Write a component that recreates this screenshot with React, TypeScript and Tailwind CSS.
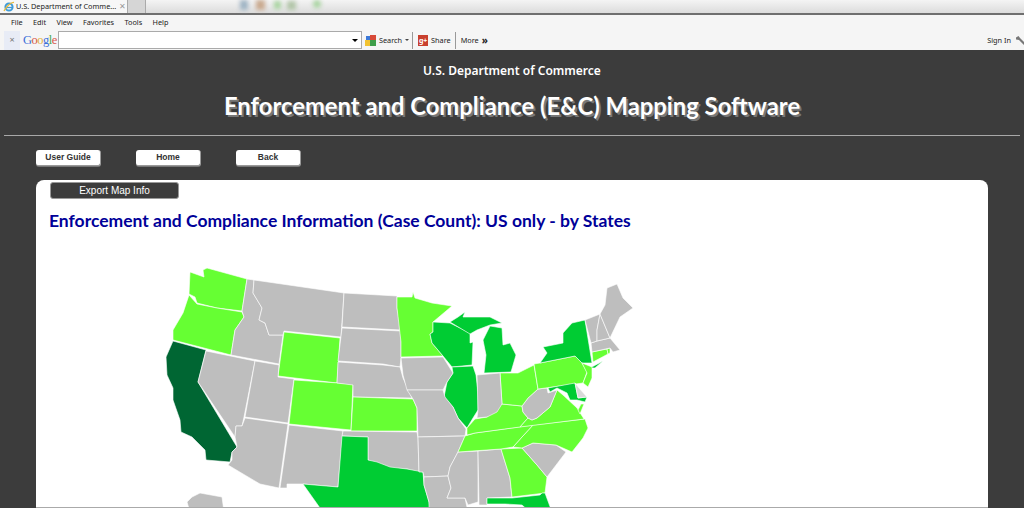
import React from "react";

const GRAY = "#bebebe";
const LIGHT = "#66ff33";
const MID = "#00cc33";
const DARK = "#006633";

// state outlines, traced in page pixels
const states: [string, string, string][] = [
  ["WA", LIGHT, "190,272 204,277 203,270 207,268 247,279 242,311 217,308 197,303 195,297 189,294"],
  ["OR", LIGHT, "189,295 197,304 217,308 242,312 244,317 235,330 231,355 173,340 173,330 183,313"],
  ["CA", DARK, "173,341 206,350 198,382 237,447 232,452 230,462 206,460 205,450 192,437 181,432 180,420 173,400 173,388 167,375 166,357"],
  ["NV", GRAY, "206,351 255,361 244,417 242,426 236,426 235,437 198,382"],
  ["ID", GRAY, "247,279 254,280 253,293 262,308 259,320 265,323 269,335 283,335 279,364 231,355 235,330 244,317 242,311"],
  ["MT", GRAY, "254,280 344,293 341,337 284,331 283,335 269,335 265,323 259,320 262,308 253,293"],
  ["WY", LIGHT, "284,332 340,338 337,383 278,376"],
  ["UT", GRAY, "255,361 279,365 278,377 294,379 288,423 245,417"],
  ["CO", LIGHT, "294,380 353,384 351,430 289,424"],
  ["AZ", GRAY, "245,418 288,424 279,488 260,484 228,465 232,460 232,452 237,447 235,437 236,426 242,426"],
  ["NM", GRAY, "289,425 343,431 338,487 303,484 287,484 287,488 280,488"],
  ["ND", GRAY, "344,293 397,296 397,308 401,330 342,327"],
  ["SD", GRAY, "342,328 401,331 401,345 401,358 400,367 383,364 338,361"],
  ["NE", GRAY, "338,362 383,365 400,367 403,378 412,398 353,397 353,385 337,383"],
  ["KS", LIGHT, "353,397 413,399 417,408 417,431 351,431"],
  ["OK", GRAY, "343,431 417,432 418,438 419,472 407,469 390,468 368,460 368,437 342,436"],
  ["TX", MID, "342,436 368,437 368,460 377,462 390,467 407,469 423,472 424,485 429,502 432,520 325,520 320,508 303,484 338,487"],
  ["MN", LIGHT, "397,297 412,297 413,292 415,298 432,303 452,306 433,322 433,332 430,334 432,343 443,356 401,357 401,342 397,308"],
  ["WI", MID, "433,322 450,323 470,333 470,343 473,342 472,365 452,367 443,356 432,343 430,334 433,332"],
  ["MIU", MID, "450,322 458,317 465,312 463,317 490,317 502,323 490,325 477,330 470,334"],
  ["MIL", MID, "490,326 502,328 503,345 510,343 516,355 511,372 484,373 486,355 483,340"],
  ["IL", MID, "452,367 473,366 476,375 478,392 478,410 473,418 467,428 458,418 453,407 444,397 447,382 453,373"],
  ["IA", GRAY, "401,358 443,357 453,373 447,382 443,390 407,390 403,375"],
  ["MO", GRAY, "407,390 443,390 445,397 453,407 458,418 466,429 465,436 458,436 418,437 417,408 413,399"],
  ["AR", GRAY, "418,437 465,436 458,452 450,467 448,476 424,477 423,472 419,472"],
  ["LA", GRAY, "424,477 448,476 451,488 447,498 465,498 468,512 429,512 429,502 424,485"],
  ["MS", GRAY, "458,452 478,451 478,502 468,505 465,498 447,498 451,488 448,476 450,467"],
  ["AL", GRAY, "478,451 501,449 510,478 512,497 487,498 487,505 479,505"],
  ["GA", LIGHT, "501,449 522,448 537,465 547,477 545,493 512,497 510,478"],
  ["FL", MID, "487,498 512,498 540,495 542,493 545,493 552,512 530,512 522,505 505,504 487,504"],
  ["SC", GRAY, "522,448 533,443 556,445 566,452 547,477 537,465"],
  ["NC", LIGHT, "513,447 522,437 533,425 585,419 588,428 583,438 572,452 556,445 533,443 522,448"],
  ["TN", LIGHT, "458,452 465,436 475,433 533,425 522,437 513,447 501,449"],
  ["KY", LIGHT, "467,435 467,428 475,419 487,417 502,404 522,406 523,412 528,418 520,427 475,433"],
  ["VA", LIGHT, "520,427 528,418 532,420 537,418 550,407 557,390 563,395 577,408 584,419"],
  ["WV", GRAY, "522,406 528,398 538,389 547,388 548,393 557,390 550,407 537,418 532,420 528,418 523,412"],
  ["OH", LIGHT, "500,373 518,373 534,365 538,389 528,398 522,406 502,404"],
  ["IN", GRAY, "477,375 500,373 502,404 497,412 487,417 477,418 478,410"],
  ["PA", LIGHT, "534,364 540,363 575,356 582,363 587,372 583,383 538,389"],
  ["NY", MID, "585,320 592,363 582,363 575,356 540,363 547,353 543,347 563,343 563,333 572,323"],
  ["LI", MID, "590,368 603,361 595,368"],
  ["NJ", LIGHT, "582,363 592,367 592,378 588,387 583,383 587,373"],
  ["CT", LIGHT, "592,352 607,349 608,354 593,362"],
  ["RI", LIGHT, "607,349 610,348 610,353 608,354"],
  ["MA", GRAY, "591,343 597,341 610,338 620,350 613,352 610,348 592,352"],
  ["VT", GRAY, "585,320 600,314 597,330 597,341 591,343"],
  ["NH", GRAY, "600,314 610,338 597,341 597,330"],
  ["ME", GRAY, "607,288 617,284 623,298 633,308 620,317 610,338 600,314 605,305"],
  ["MD", MID, "548,388 575,383 578,398 587,397 585,402 577,400 570,400 567,393 557,388 550,392"],
  ["DE", "#d9d9d9", "575,383 579,388 587,397 578,398"],
  ["VS", LIGHT, "581,404 584,404 580,414 578,410"],
  ["AK", GRAY, "187,502 192,497 200,493 222,497 224,512 190,512"],
];

const menus = ["File", "Edit", "View", "Favorites", "Tools", "Help"];

const TopButton = ({ label }: { label: string }) => (
  <button className="w-[65px] h-[16px] bg-white rounded-[3px] border-b border-r border-[#999] text-[8.5px] leading-none font-bold text-[#333] shadow-[0_1px_0_#777]">
    {label}
  </button>
);

export default function App() {
  return (
    <div className="w-[1024px] h-[508px] overflow-hidden flex flex-col bg-[#3c3c3c] font-['Liberation_Sans',sans-serif]">
      {/* Browser tabs */}
      <div className="h-[15px] shrink-0 flex bg-gradient-to-b from-[#f4f4f4] to-[#dcdcdc] border-b-2 border-[#6f6f6f]">
        <div className="w-[128px] h-[13px] flex items-center bg-[#f7f7f7] border-r border-[#aaa] pl-[3px]">
          <svg width="12" height="12" viewBox="0 0 12 12" className="shrink-0">
            <circle cx="6" cy="6" r="3.6" fill="none" stroke="#3f9bd8" strokeWidth="2" />
            <path d="M2 6.5h8" stroke="#3f9bd8" strokeWidth="1.3" />
            <path d="M1 10C3 6 8 1 11 1.5" fill="none" stroke="#e8b93a" strokeWidth="1.2" />
          </svg>
          <span className="ml-[1px] text-[7.3px] font-['Noto_Sans',sans-serif] text-[#222] whitespace-nowrap">U.S. Department of Comme...</span>
          <span className="ml-[3px] text-[8px] leading-none text-[#999]">✕</span>
        </div>
        <div className="w-[18px] h-[13px] bg-[#d6d6d6] border-r border-[#aaa]" />
        <svg width="110" height="12" className="ml-[86px] blur-[2px]">
          <rect x="8" y="0" width="8" height="10" fill="#9fb4c4" />
          <rect x="24" y="0" width="9" height="10" fill="#c9a98f" />
          <rect x="42" y="1" width="7" height="8" fill="#a8d4a0" />
          <rect x="55" y="1" width="9" height="9" fill="#b2c6a8" />
          <circle cx="85" cy="4" r="4" fill="#a8d4a0" />
        </svg>
      </div>

      {/* Menu bar */}
      <div className="h-[15px] shrink-0 flex items-center gap-[10.4px] pl-[11px] bg-[#f5f5f5] text-[7.3px] text-[#222] font-['Noto_Sans',sans-serif]">
        {menus.map((m) => (
          <span key={m}>{m}</span>
        ))}
      </div>

      {/* Google toolbar */}
      <div className="h-[20px] shrink-0 flex items-center bg-[#f5f5f5] text-[7.3px] text-[#222] font-['Noto_Sans',sans-serif]">
        <div className="w-[16px] h-[19px] ml-[4px] flex items-center justify-center bg-[#e8ecf6] text-[#777] text-[9px]">×</div>
        <span className="ml-[3px] w-[35px] text-[12.5px] leading-none font-['Liberation_Serif',serif] tracking-[-0.5px]">
          <span className="text-[#3b6fd8]">G</span>
          <span className="text-[#d8574a]">o</span>
          <span className="text-[#e2b23a]">o</span>
          <span className="text-[#3b6fd8]">g</span>
          <span className="text-[#4aa84f]">l</span>
          <span className="text-[#d8574a]">e</span>
        </span>
        <div className="w-[304px] h-[18px] flex items-center justify-end pr-[3px] bg-white border border-[#aaa]">
          <span className="w-0 h-0 border-x-[3px] border-x-transparent border-t-[3px] border-t-black" />
        </div>
        <svg width="11" height="11" viewBox="0 0 11 11" className="ml-[3px] shrink-0">
          <rect x="0" y="5" width="5" height="6" fill="#f2c230" />
          <rect x="5" y="0" width="6" height="5" fill="#d84a38" />
          <rect x="5" y="5" width="6" height="6" fill="#3f9f4a" />
          <rect x="1" y="1" width="4" height="4" fill="#3b78d8" />
        </svg>
        <span className="ml-[3px]">Search</span>
        <span className="ml-[3px] w-0 h-0 border-x-[2px] border-x-transparent border-t-[2px] border-t-[#444]" />
        <span className="ml-[3px] h-[17px] border-l border-[#999]" />
        <span className="ml-[5px] w-[10px] h-[11px] bg-[#c9402e] text-white text-[7px] leading-[11px] font-bold text-center">g+</span>
        <span className="ml-[3px]">Share</span>
        <span className="ml-[4px] h-[17px] border-l border-[#999]" />
        <span className="ml-[5px]">More</span>
        <span className="ml-[3px] font-bold text-[10px] leading-none">»</span>
        <span className="ml-auto">Sign In</span>
        <svg width="8" height="9" viewBox="0 0 8 9" className="ml-[5px]">
          <path d="M0 1.5 2.5 0 4 2l4 4v3L3 4 0 3.5Z" fill="#777" />
        </svg>
      </div>

      {/* Page header */}
      <div className="h-[86px] shrink-0 mx-[4px] flex flex-col items-center border-b border-[#a8a8a8] font-['Noto_Sans',sans-serif] text-white">
        <h2 className="mt-[12px] text-[12px] leading-[18px] font-semibold">U.S. Department of Commerce</h2>
        <h1 className="mt-[11px] text-[23.8px] leading-[30px] font-bold font-['Lato',sans-serif] [text-shadow:2px_2px_0_#777]">
          Enforcement and Compliance (E&amp;C) Mapping Software
        </h1>
      </div>

      {/* Nav buttons */}
      <div className="shrink-0 flex gap-[35px] pl-[36px] pt-[14px]">
        <TopButton label="User Guide" />
        <TopButton label="Home" />
        <TopButton label="Back" />
      </div>

      {/* Main panel */}
      <div className="mt-[14px] ml-[36px] w-[952px] flex-1 min-h-0 overflow-hidden bg-white rounded-t-[8px] border-b border-[#aaa]">
        <button className="ml-[14px] mt-[2px] block w-[129px] h-[17px] bg-[#3c3c3c] rounded-[3px] border border-[#999] text-[10px] leading-none text-white">
          Export Map Info
        </button>
        <h3 className="ml-[13px] mt-[10px] text-[17.5px] leading-[24px] font-bold text-[#000099] font-['Lato',sans-serif]">
          Enforcement and Compliance Information (Case Count): US only - by States
        </h3>
        <svg width="500" height="260" viewBox="150 260 500 260" className="ml-[114px] mt-[27px]">
          {states.map(([id, fill, pts]) => (
            <polygon key={id} points={pts} fill={fill} stroke="#ffffff" strokeWidth="0.6" strokeLinejoin="round" />
          ))}
        </svg>
      </div>
    </div>
  );
}
